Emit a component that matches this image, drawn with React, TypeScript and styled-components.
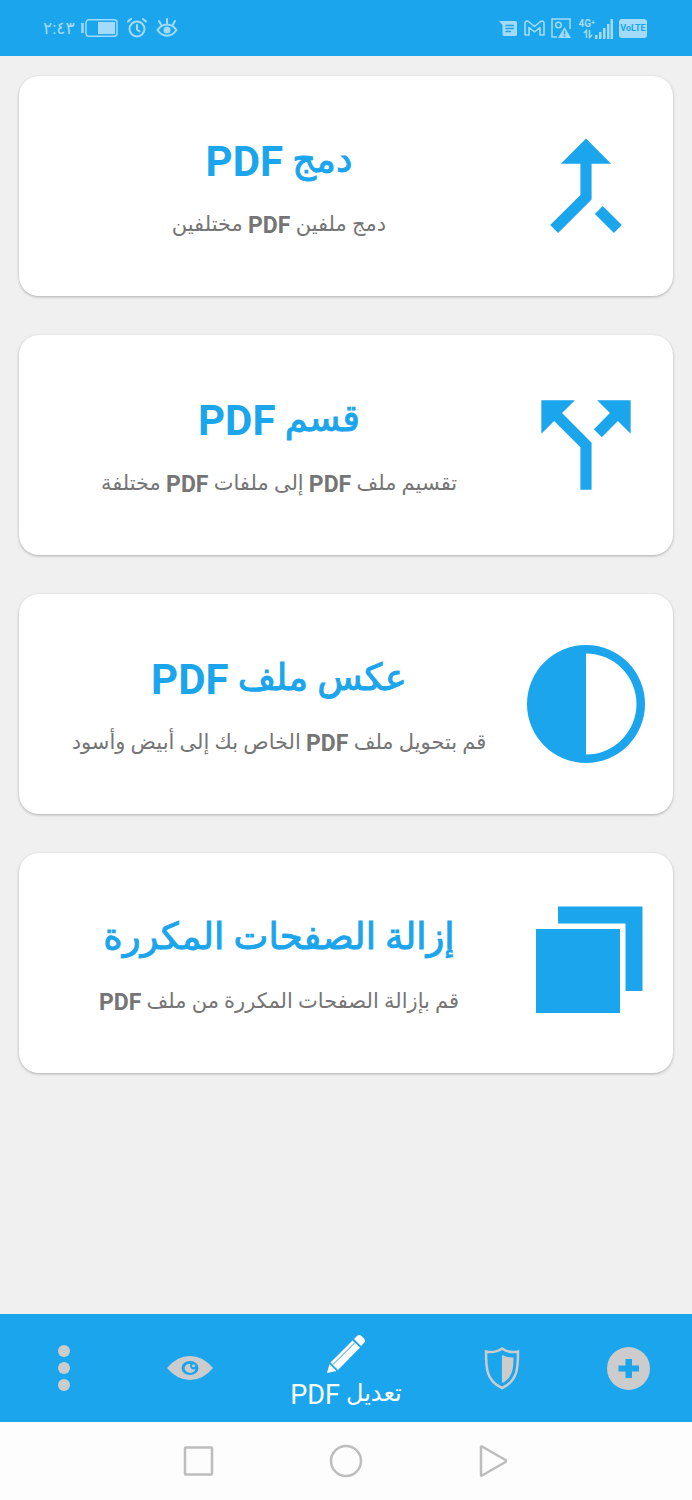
import React from 'react';
import styled, { createGlobalStyle } from 'styled-components';

const blue = '#1ba5ed';
const statusInk = '#a4dbf8';
const muted = '#cccccc';

const GlobalStyle = createGlobalStyle`
  * { box-sizing: border-box; }
  body {
    margin: 0;
    background: #f0f0f0;
    font-family: Roboto, "DejaVu Sans", sans-serif;
  }
  button { font: inherit; }
`;

const Screen = styled.div`
  display: flex;
  flex-direction: column;
  min-height: 100vh;
`;

const StatusBar = styled.header`
  display: flex;
  justify-content: space-between;
  align-items: center;
  height: 56px;
  padding: 0 45px 0 43px;
  background: ${blue};
  color: ${statusInk};
`;

const StatusGroup = styled.div<{ $gap: number }>`
  display: flex;
  align-items: center;
  gap: ${(p) => p.$gap}px;

  svg { display: block; }
`;

const Clock = styled.time`
  width: 29px;
  font-size: 17px;
  line-height: 20px;
  white-space: nowrap;
`;

const Signal = styled.div`
  display: flex;
  align-items: flex-end;
  height: 22px;
`;

const Network = styled.div`
  display: flex;
  flex-direction: column;
  align-items: flex-end;
  width: 18px;
  font: bold 10px/11px Roboto, sans-serif;
  white-space: nowrap;
`;

const VoLte = styled.span`
  width: 28px;
  border-radius: 3px;
  background: ${statusInk};
  color: ${blue};
  font: bold 9px/19px Roboto, sans-serif;
  text-align: center;
`;

const Tools = styled.main`
  flex: 1;
  display: flex;
  flex-direction: column;
  gap: 39px;
  padding: 20px 19px;
`;

const Card = styled.button`
  display: flex;
  align-items: center;
  width: 100%;
  min-height: 220px;
  padding: 0 20px;
  border: 0;
  border-radius: 20px;
  background: #fff;
  box-shadow: 0 1px 3px rgba(0, 0, 0, 0.28);
  cursor: pointer;

  svg { flex: none; display: block; fill: ${blue}; }
`;

const CardText = styled.span`
  flex: 1;
  display: flex;
  flex-direction: column;
  gap: 20px;
  text-align: center;
`;

const CardTitle = styled.span`
  color: ${blue};
  font-size: 37px;
  line-height: 56px;
  -webkit-text-stroke: 1px ${blue};
`;

const CardNote = styled.span`
  color: #757575;
  font-size: 21px;
  line-height: 32px;
`;

const Latin = styled.bdi<{ $size: number; $drop: number }>`
  font-size: ${(p) => p.$size}px;
  line-height: 1;
  vertical-align: -${(p) => p.$drop}px;
`;

const BoldLatin = styled(Latin)`
  font-weight: 700;
  -webkit-text-stroke: 0;
`;

const TabBar = styled.nav`
  display: grid;
  grid-template-columns: 1fr 1fr 1.45fr 1fr 1fr;
  height: 108px;
  background: ${blue};
`;

const Tab = styled.button<{ $active?: boolean }>`
  display: flex;
  flex-direction: column;
  align-items: center;
  justify-content: center;
  gap: 2px;
  padding: ${(p) => (p.$active ? '10px 0 0' : '0')};
  border: 0;
  background: none;
  color: ${(p) => (p.$active ? '#fff' : muted)};
  cursor: pointer;

  svg { display: block; fill: currentColor; }
`;

const TabLabel = styled.span`
  font-size: 24px;
  line-height: 36px;
  white-space: nowrap;
`;

const SystemBar = styled.nav`
  display: grid;
  grid-template-columns: repeat(3, 1fr);
  height: 78px;
  padding: 0 18%;
  background: #fdfdfd;
`;

const SystemButton = styled.button`
  display: flex;
  align-items: center;
  justify-content: center;
  padding: 0;
  border: 0;
  background: none;
  cursor: pointer;

  svg { display: block; fill: none; stroke: #bdbdbd; stroke-width: 2.5; stroke-linejoin: round; }
`;

const MergeIcon = () => (
  <svg width="134" height="134" viewBox="0 0 24 24" aria-hidden="true">
    <path d="M17 20.41L18.41 19 15 15.59 13.59 17 17 20.41zM7.5 8H11v5.59L5.59 19 7 20.41l6-6V8h3.5L12 3.5 7.5 8z" />
  </svg>
);

const SplitIcon = () => (
  <svg width="134" height="134" viewBox="0 0 24 24" aria-hidden="true">
    <path d="M14 4l2.29 2.29-2.88 2.88 1.42 1.42 2.88-2.88L20 10V4zm-4 0H4v6l2.29-2.29 4.71 4.7V20h2v-8.41l-5.29-5.3z" />
  </svg>
);

const InvertIcon = () => (
  <svg width="134" height="134" viewBox="0 0 134 134" aria-hidden="true">
    <path fillRule="evenodd" d="M67 8a59 59 0 1 0 0 118a59 59 0 1 0 0-118zM67 16.5a50.5 50.5 0 0 1 0 101z" />
  </svg>
);

const PagesIcon = () => (
  <svg width="134" height="134" viewBox="0 0 134 134" aria-hidden="true">
    <path d="M17 33h84v84H17zM39 10.500h84.500v84.500h-17V27.500H39z" />
  </svg>
);

type Run = { text: string; latin?: boolean };
type Tool = { icon: React.ReactNode; title: Run[]; note: Run[] };

const ar = (text: string): Run => ({ text });
const pdf: Run = { text: 'PDF', latin: true };

const tools: Tool[] = [
  { icon: <MergeIcon />, title: [ar('دمج '), pdf], note: [ar('دمج ملفين '), pdf, ar(' مختلفين')] },
  { icon: <SplitIcon />, title: [ar('قسم '), pdf], note: [ar('تقسيم ملف '), pdf, ar(' إلى ملفات '), pdf, ar(' مختلفة')] },
  { icon: <InvertIcon />, title: [ar('عكس ملف '), pdf], note: [ar('قم بتحويل ملف '), pdf, ar(' الخاص بك إلى أبيض وأسود')] },
  { icon: <PagesIcon />, title: [ar('إزالة الصفحات المكررة')], note: [ar('قم بإزالة الصفحات المكررة من ملف '), pdf] },
];

const StatusIcons = () => (
  <StatusBar dir="ltr">
    <StatusGroup $gap={9}>
      <Clock>٢:٤٣</Clock>
      <svg width="37" height="20" viewBox="0 0 37 20" fill="none" stroke={statusInk} strokeWidth="1.5" aria-hidden="true">
        <path d="M1.500 5v10" strokeWidth="2.500" />
        <rect x="5" y="1.800" width="31" height="16.500" rx="3" />
        <rect x="17" y="4" width="17" height="12" fill={statusInk} stroke="none" />
      </svg>
      <svg width="20" height="22" viewBox="0 0 20 22" fill="none" stroke={statusInk} strokeWidth="2" strokeLinecap="round" aria-hidden="true">
        <circle cx="10" cy="12" r="7.500" />
        <path d="M10 8v4.500l2.500 2M1 4.500L4 2M19 4.500L16 2" />
      </svg>
      <svg width="22" height="22" viewBox="0 0 22 22" fill="none" stroke={statusInk} strokeWidth="2" strokeLinecap="round" aria-hidden="true">
        <path d="M1.500 13c5-7.500 14-7.500 19 0c-5 7.500-14 7.500-19 0zM11 2v4M3 4l2 3.500M19 4l-2 3.500" />
        <circle cx="11" cy="13" r="3.500" fill={statusInk} stroke="none" />
      </svg>
    </StatusGroup>
    <StatusGroup $gap={6}>
      <svg width="19" height="18" viewBox="0 0 19 18" fill="none" aria-hidden="true">
        <path d="M0 2h16.500q1.500 0 1.500 1.500v12q0 1.500-1.500 1.500H5q-1.500 0-1.500-1.500V6z" fill={statusInk} />
        <path d="M6.500 6.500h8.500M6.500 9.500h8.500M6.500 12.500h5.500" stroke={blue} strokeWidth="1.300" />
      </svg>
      <svg width="21" height="18" viewBox="0 0 21 18" fill="none" stroke={statusInk} strokeWidth="1.600" strokeLinejoin="round" aria-hidden="true">
        <path d="M1 3.500V16h4V8.500l5.500 4.500L16 8.500V16h4V3.500q-1-2-3.500-1L10.500 7.500 4.500 2.500Q2 1.500 1 3.500z" />
      </svg>
      <svg width="20" height="20" viewBox="0 0 20 20" fill="none" stroke={statusInk} strokeWidth="1.500" aria-hidden="true">
        <path d="M6 19H1V1h18v10" />
        <circle cx="7.500" cy="7" r="2.800" />
        <path d="M13.500 9L20 20H7z" fill={statusInk} stroke="none" />
        <path d="M13.500 12.500v4M13.500 17.500v1.300" stroke={blue} />
      </svg>
      <Signal>
        <Network>
          <span>4G⁺</span>
          <svg width="12" height="10" viewBox="0 0 12 10" fill="none" stroke={statusInk} strokeWidth="1.500" aria-hidden="true">
            <path d="M1 4l2.500-2.500V9M6.500 1v7.500L9 6" />
          </svg>
        </Network>
        <svg width="18" height="20" viewBox="0 0 18 20" fill={statusInk} aria-hidden="true">
          <path d="M0 16h2.500v4H0zM4 13h2.500v7H4zM8 9h2.500v11H8zM12 5h2.500v15h-2.500zM15.500 0h2.500v20h-2.500z" />
        </svg>
      </Signal>
      <VoLte>VoLTE</VoLte>
    </StatusGroup>
  </StatusBar>
);

export default function App() {
  return (
    <Screen dir="rtl" lang="ar">
      <GlobalStyle />
      <StatusIcons />
      <Tools>
        {tools.map((tool, i) => (
          <Card key={i} type="button">
            {tool.icon}
            <CardText>
              <CardTitle>
                {tool.title.map((run, j) =>
                  run.latin ? <BoldLatin key={j} $size={42} $drop={4}>{run.text}</BoldLatin> : run.text,
                )}
              </CardTitle>
              <CardNote>
                {tool.note.map((run, j) =>
                  run.latin ? <BoldLatin key={j} $size={23} $drop={2}>{run.text}</BoldLatin> : run.text,
                )}
              </CardNote>
            </CardText>
          </Card>
        ))}
      </Tools>
      <TabBar>
        <Tab type="button" aria-label="إضافة">
          <svg width="43" height="43" viewBox="0 0 43 43" aria-hidden="true">
            <path fillRule="evenodd" d="M21.500 0a21.500 21.500 0 1 0 0 43a21.500 21.500 0 1 0 0-43zM18.500 12h6.500v6.500H32v6h-7v6.500h-6.500V24.500H11.500v-6h7z" />
          </svg>
        </Tab>
        <Tab type="button" aria-label="حماية">
          <svg width="36" height="44" viewBox="0 0 36 44" aria-hidden="true">
            <path fill="none" stroke="currentColor" strokeWidth="2.500" strokeLinejoin="miter" d="M18 2.500Q11 7.500 2 5.500C2 21 2 35 18 42C34 35 34 21 34 5.500Q25 7.500 18 2.500z" />
            <path d="M18 9q5.500 2.800 11.500 2.500C29.500 23 28.500 32 18 37z" />
          </svg>
        </Tab>
        <Tab type="button" $active aria-current="page">
          <svg width="38" height="38" viewBox="0 0 38 38" aria-hidden="true">
            <path d="M27 4l3-3q2-2 4.500 0l2.500 2.500q2 2.500 0 4.500l-3 3zM25.500 5.500l7.500 7L11 35 3.500 27.500zM2.500 29L9.500 36 0 38z" />
            <path d="M27.500 8L6 29.500" fill="none" stroke={blue} strokeWidth="1" />
          </svg>
          <TabLabel>تعديل <Latin $size={27} $drop={3}>PDF</Latin></TabLabel>
        </Tab>
        <Tab type="button" aria-label="عرض">
          <svg width="46" height="24" viewBox="0 0 46 24" aria-hidden="true">
            <path fillRule="evenodd" d="M0 12Q10 0 23 0T46 12Q36 24 23 24T0 12zM23 5a8.500 7 0 1 0 0 14a8.500 7 0 1 0 0-14z" />
            <path d="M23.500 7.800a5.500 4.500 0 1 0 5 5.200q-2.500 1.300-4.500-.500q-2-2.500-.5-4.700z" />
            <circle cx="26.500" cy="9.800" r="1.500" />
          </svg>
        </Tab>
        <Tab type="button" aria-label="المزيد">
          <svg width="12" height="46" viewBox="0 0 12 46" aria-hidden="true">
            <circle cx="6" cy="6" r="6" />
            <circle cx="6" cy="23" r="6" />
            <circle cx="6" cy="40" r="6" />
          </svg>
        </Tab>
      </TabBar>
      <SystemBar dir="ltr">
        <SystemButton type="button" aria-label="التطبيقات الأخيرة">
          <svg width="32" height="32" viewBox="0 0 32 32"><rect x="3" y="2.500" width="27" height="27" rx="1" /></svg>
        </SystemButton>
        <SystemButton type="button" aria-label="الرئيسية">
          <svg width="34" height="34" viewBox="0 0 34 34"><circle cx="17" cy="17" r="15" /></svg>
        </SystemButton>
        <SystemButton type="button" aria-label="رجوع">
          <svg width="30" height="34" viewBox="0 0 30 34"><path d="M2 2.800Q2 2 3 2.500L26.500 16Q27.500 17 26.500 18L3 31.500Q2 32 2 31z" /></svg>
        </SystemButton>
      </SystemBar>
    </Screen>
  );
}
